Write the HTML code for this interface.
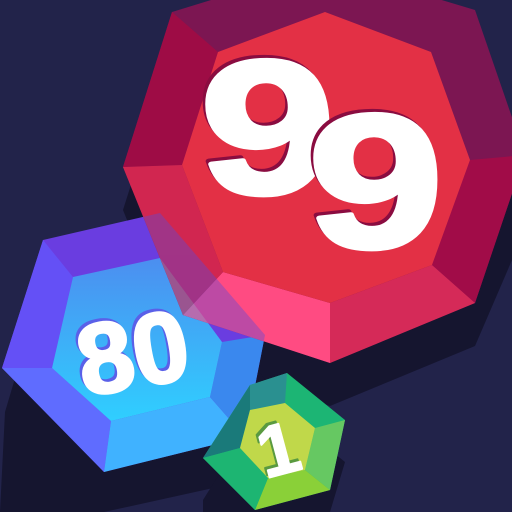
<!DOCTYPE html>
<html><head><style>html,body{margin:0;padding:0;background:#22234a;}svg{display:block}</style></head><body>
<svg width="512" height="512" viewBox="0 0 512 512" xmlns="http://www.w3.org/2000/svg">
<defs>
<clipPath id="redclip"><polygon points="172,12 325,-35 475,10 525,155 475,303 330,363 183,315 123,167"/></clipPath>
<linearGradient id="bface" x1="0" y1="0" x2="0" y2="1"><stop offset="0" stop-color="#4c8ef0"/><stop offset="1" stop-color="#2fcfff"/></linearGradient>
</defs>
<rect width="512" height="512" fill="#22234a"/>
<polygon points="123,210 172,55 475,53 530,200 512,260 475,346 330,406 183,358" fill="#15152f"/>
<polygon points="5,412 43,284 160,257 265,379 245,481 104,512 0,512" fill="#15152f"/>
<polygon points="203,500 250,425 287,415 345,462 330,512 203,512" fill="#15152f"/>
<g>
<polygon points="2,368 43,240 160,213 265,335 245,437 104,472" fill="#6a3de0"/>
<polygon points="2,368 43,240 73,277 52,368" fill="#6450f6"/>
<polygon points="2,368 52,368 111,421 104,472" fill="#5f6cff"/>
<polygon points="104,472 111,421 210,397 245,437" fill="#40b2ff"/>
<polygon points="245,437 210,397 222,342 265,335" fill="#3a88ee"/>
<polygon points="52,368 73,277 160,258 222,342 210,397 111,421" fill="url(#bface)"/>
</g>
<polygon points="172,12 325,-35 475,10 525,155 475,303 330,363 183,315 123,167" fill="#7c1652"/>
<polygon points="172,12 218,52 182,165 123,167" fill="#9e0c45"/>
<polygon points="525,155 470,160 432,265 475,303" fill="#a10c48"/>
<polygon points="475,303 432,265 330,303 330,363" fill="#d52a58"/>
<polygon points="330,363 330,303 223,272 183,315" fill="#ff4b82"/>
<polygon points="183,315 223,272 182,165 123,167" fill="#d12650"/>
<polygon points="218,52 325,12 431,52 470,160 432,265 330,303 223,272 182,165" fill="#e33045"/>
<g clip-path="url(#redclip)" opacity="0.4">
<polygon points="2,368 43,240 160,213 265,335 245,437 104,472" fill="#5a4ad8"/>
<polygon points="52,368 73,277 160,258 222,342 210,397 111,421" fill="#4a9ef0"/>
</g>
<g font-family="Liberation Sans, sans-serif" font-weight="bold" font-size="190" stroke-linejoin="round">
<g transform="translate(200,193) scale(1.28,1)">
<text x="-2" y="-3" fill="#8a0c40" stroke="#8a0c40" stroke-width="5">9</text>
<text x="0" y="0" fill="#fff" stroke="#fff" stroke-width="5">9</text>
</g>
<g transform="translate(308,247) scale(1.28,1)">
<text x="-2" y="-3" fill="#8a0c40" stroke="#8a0c40" stroke-width="5">9</text>
<text x="0" y="0" fill="#fff" stroke="#fff" stroke-width="5">9</text>
</g>
</g>
<g font-family="Liberation Sans, sans-serif" font-weight="bold" font-size="100" transform="rotate(-10 140 345)" stroke-linejoin="round">
<text x="74" y="383" fill="#5a60e8" stroke="#5a60e8" stroke-width="3">80</text>
<text x="76" y="386" fill="#fff" stroke="#fff" stroke-width="3">80</text>
</g>
<polygon points="203,458 250,385 287,373 345,420 330,490 255,510" fill="#1cb574"/>
<polygon points="250,385 287,373 285,403 250,410" fill="#2a9090"/>
<polygon points="203,458 250,385 250,410 240,448" fill="#1a7a7a"/>
<polygon points="345,420 330,490 305,470 315,428" fill="#66c862"/>
<polygon points="330,490 255,510 268,478 305,470" fill="#8ad038"/>
<polygon points="203,458 240,448 268,478 255,510" fill="#1db572"/>
<polygon points="240,448 250,410 285,403 315,428 305,470 268,478" fill="#c0d84a"/>
<g font-family="Liberation Sans, sans-serif" font-weight="bold" font-size="72" transform="rotate(-15 275 445)" stroke-linejoin="round">
<text x="255" y="472" fill="#5a9a40" stroke="#5a9a40" stroke-width="2">1</text>
<text x="257" y="475" fill="#fff" stroke="#fff" stroke-width="2">1</text>
</g>
</svg>
</body></html>
